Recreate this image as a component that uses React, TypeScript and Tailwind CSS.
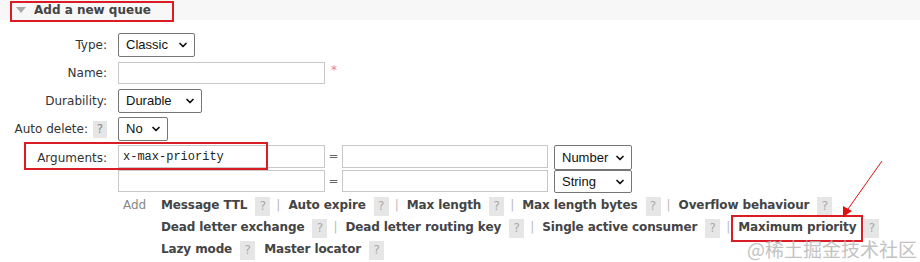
import React from 'react';
import { ChevronDown } from 'lucide-react';

const verdana = "font-['DejaVu_Sans',Verdana,sans-serif]";

function FakeSelect({ value, width, height = 'h-[24px]' }: { value: string; width: string; height?: string }) {
  return (
    <div
      className={`${width} ${height} flex items-center justify-between border border-[#767676] rounded-[2px] bg-white pl-[7px] pr-[5px] font-['Liberation_Sans',Arial,sans-serif] text-[13px] text-[#111]`}
    >
      <span>{value}</span>
      <ChevronDown className="w-[12px] h-[12px] text-[#111]" strokeWidth={3.5} />
    </div>
  );
}

function TextInput({ value, width = 'w-[207px]', height = 'h-[23px]' }: { value?: string; width?: string; height?: string }) {
  return (
    <div
      className={`${width} ${height} border border-[#c8c8c8] bg-white flex items-center pl-[4px] font-['Liberation_Mono','Courier_New',monospace] text-[12px] text-[#222]`}
    >
      {value}
    </div>
  );
}

function Help() {
  return (
    <span className="inline-flex items-center justify-center w-[15px] h-[19px] bg-[#e6e6e6] text-[#aaa] text-[12px] font-normal">
      ?
    </span>
  );
}

function Label({ children }: { children: React.ReactNode }) {
  return <div className="w-[107px] flex justify-end items-center text-[12px] text-[#333]">{children}</div>;
}

type Item = { name: string; sep?: boolean };

function LinkRow({ items }: { items: Item[] }) {
  return (
    <div className="h-[22px] flex items-center">
      {items.map((it, i) => (
        <span key={i} className="flex items-center">
          <span className="font-bold text-[12px] text-[#444] tracking-[-0.12px]">{it.name}</span>
          <span className="ml-[8px]">
            <Help />
          </span>
          {it.sep ? (
            <span className="text-[#bbb] text-[12px] ml-[6px] mr-[8px]">|</span>
          ) : (
            <span className="w-[9px]" />
          )}
        </span>
      ))}
    </div>
  );
}

export default function App() {
  return (
    <div className={`relative w-[920px] h-[262px] overflow-hidden bg-white ${verdana}`}>
      {/* Section header */}
      <div className="h-[20px] bg-[#f7f7f7] flex items-center pl-[16px]">
        <span className="w-0 h-0 border-l-[5px] border-r-[5px] border-t-[6px] border-l-transparent border-r-transparent border-t-[#aaa]" />
        <span className="ml-[8px] font-bold text-[12px] text-[#444]">Add a new queue</span>
      </div>
      <div className="absolute left-[10px] top-[1px] w-[164px] h-[21px] border-2 border-[#dc1c24]" />

      {/* Form */}
      <div className="flex flex-col">
        <div className="mt-[13px] h-[24px] flex">
          <Label>Type:</Label>
          <div className="ml-[11px]">
            <FakeSelect value="Classic" width="w-[77px]" />
          </div>
        </div>

        <div className="mt-[5px] h-[22px] flex">
          <Label>Name:</Label>
          <div className="ml-[11px] flex items-start">
            <TextInput height="h-[22px]" />
            <span className="ml-[6px] mt-[2px] text-[#f08080] text-[12px] leading-none">*</span>
          </div>
        </div>

        <div className="mt-[5px] h-[24px] flex">
          <Label>Durability:</Label>
          <div className="ml-[11px]">
            <FakeSelect value="Durable" width="w-[84px]" />
          </div>
        </div>

        <div className="mt-[4px] h-[24px] flex">
          <Label>
            <span className="whitespace-nowrap">Auto delete:</span>
            <span className="ml-[5px] inline-flex items-center justify-center w-[14px] h-[17px] bg-[#e6e6e6] text-[#888] text-[12px]">?</span>
          </Label>
          <div className="ml-[11px]">
            <FakeSelect value="No" width="w-[50px]" />
          </div>
        </div>

        <div className="relative mt-[4px] h-[25px] flex">
          <Label>Arguments:</Label>
          <div className="ml-[11px] flex items-start">
            <TextInput value="x-max-priority" />
            <span className="w-[17px] text-center text-[12px] text-[#666] leading-[22px]">=</span>
            <TextInput width="w-[206px]" />
            <div className="ml-[6px]">
              <FakeSelect value="Number" width="w-[78px]" height="h-[25px]" />
            </div>
          </div>
          <div className="absolute left-[24px] top-[-3px] w-[244px] h-[28px] border-2 border-[#dc1c24]" />
        </div>

        <div className="h-[23px] flex">
          <div className="w-[107px]" />
          <div className="ml-[11px] flex items-start">
            <TextInput height="h-[22px]" />
            <span className="w-[17px] text-center text-[12px] text-[#666] leading-[22px]">=</span>
            <TextInput width="w-[206px]" height="h-[22px]" />
            <div className="ml-[6px]">
              <FakeSelect value="String" width="w-[78px]" height="h-[23px]" />
            </div>
          </div>
        </div>

        <div className="mt-[1px] flex">
          <div className="w-[107px]" />
          <div className="ml-[11px] w-[43px] pl-[5px] pt-[2px] text-[12px] text-[#888]">Add</div>
          <div className="flex flex-col">
            <LinkRow
              items={[
                { name: 'Message TTL', sep: true },
                { name: 'Auto expire', sep: true },
                { name: 'Max length', sep: true },
                { name: 'Max length bytes', sep: true },
                { name: 'Overflow behaviour' },
              ]}
            />
            <LinkRow
              items={[
                { name: 'Dead letter exchange', sep: true },
                { name: 'Dead letter routing key', sep: true },
                { name: 'Single active consumer', sep: true },
                { name: 'Maximum priority' },
              ]}
            />
            <LinkRow items={[{ name: 'Lazy mode' }, { name: 'Master locator' }]} />
          </div>
        </div>
      </div>

      {/* Annotations */}
      <div className="absolute left-[731px] top-[215px] w-[132px] h-[27px] border-2 border-[#dc1c24]" />
      <svg className="absolute left-0 top-0 pointer-events-none" width="920" height="262">
        <line x1="882" y1="161" x2="848" y2="209" stroke="#e01010" strokeWidth="1" />
        <polygon points="843,217 843,206 852,211" fill="#e01010" />
      </svg>
      <div className="absolute left-[747px] top-[238px] font-['Noto_Sans_CJK_SC',sans-serif] text-[19px] leading-[22px] text-[#b4b4b4] opacity-80 whitespace-nowrap">
        @稀土掘金技术社区
      </div>
    </div>
  );
}
